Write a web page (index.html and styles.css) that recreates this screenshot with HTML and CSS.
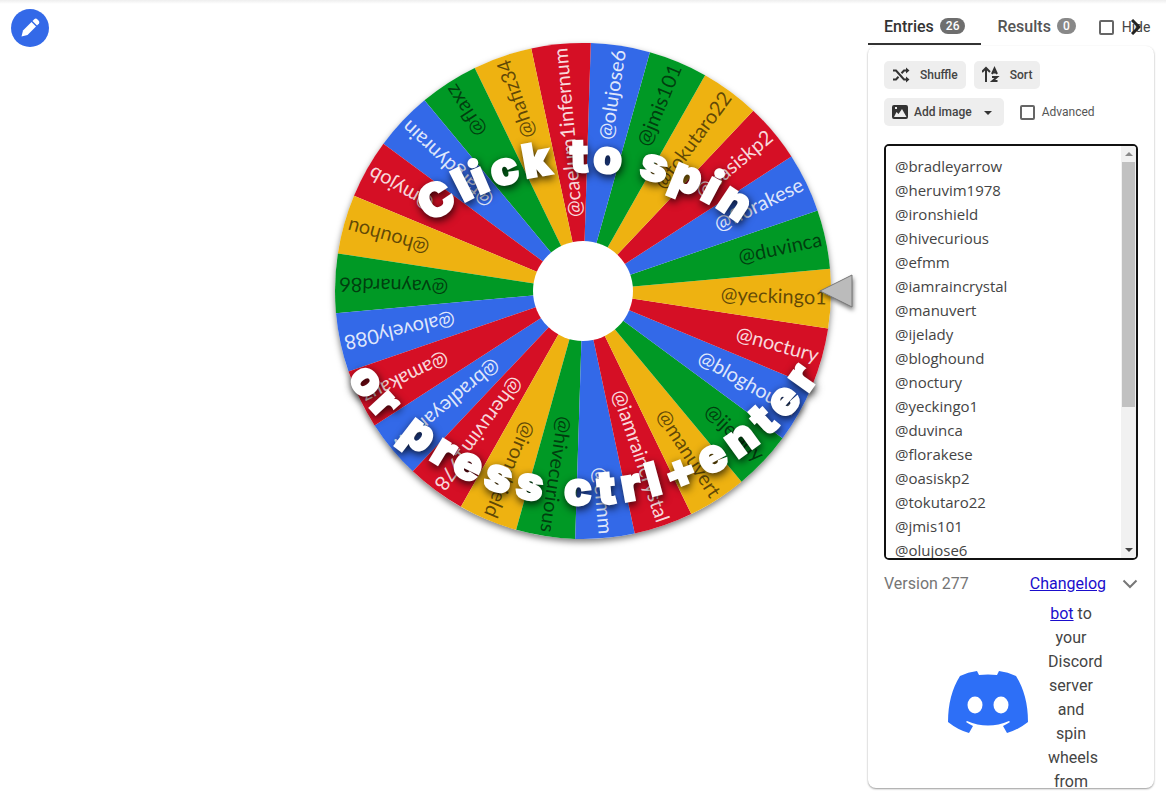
FILE: index.html
```
<!DOCTYPE html>
<html lang="en">
<head>
  <meta charset="UTF-8">
  <meta name="viewport" content="width=device-width, initial-scale=1.0">
  <title>Wheel of Names</title>
  <link rel="stylesheet" href="styles.css">
</head>
<body>
  <div class="page">
    <div class="left">
      <button class="edit-button" aria-label="Edit title">
        <svg width="20" height="20" viewBox="0 0 20 20" fill="#fff"><path d="M1.500 18.500 3 12.500 11.500 4 16 8.500 7.500 17Z"/><path d="M12.500 3 14.500 1Q16 0 17.500 1.500L18.500 2.500Q20 4 19 5.500L17 7.500Z"/></svg>
      </button>
    </div>

    <main class="stage">
      <svg class="wheel" viewBox="0 0 570 570">
        <circle class="wheel-shadow" cx="285" cy="285" r="248"/>
        <g id="slices"></g>
        <circle cx="285" cy="285" r="50" fill="#fff"/>
        <path class="pointer" d="M522 285 554 269V301Z"/>
        <text class="hint" id="hint-top">Click to spin</text>
        <text class="hint" id="hint-bottom">or press ctrl+enter</text>
      </svg>
    </main>

    <aside class="sidebar">
      <div class="tabs">
        <button class="tab active">Entries <span class="badge">26</span></button>
        <button class="tab">Results <span class="badge light">0</span></button>
        <label class="hide"><input type="checkbox"> <span>Hide</span></label>
        <svg class="tab-arrow" width="10" height="16" viewBox="0 0 10 16"><path d="M1 1 8 8 1 15" fill="none" stroke="#222" stroke-width="3"/></svg>
      </div>

      <div class="card">
        <div class="tools">
          <button class="tool">
            <svg width="18" height="18" viewBox="0 0 18 18" fill="none" stroke="#333" stroke-width="2"><path d="M1 4.500H4L12 13.500H15M1 13.500H4L6.500 10.800M9.500 7.200 12 4.500H15"/><path d="M14 1.500 17.500 4.500 14 7.500ZM14 10.500 17.500 13.500 14 16.500Z" fill="#333" stroke="none"/></svg>
            <span>Shuffle</span>
          </button>
          <button class="tool">
            <svg width="18" height="18" viewBox="0 0 18 18" fill="none" stroke="#333" stroke-width="2"><path d="M4 16V3M0 6 4 2 8 6"/><path d="M10 8 12.500 2.500 15 8M11 6.500H14M10 11H15L10.500 15H15.500"/></svg>
            <span>Sort</span>
          </button>
          <button class="tool image">
            <svg width="18" height="18" viewBox="0 0 18 18"><path fill="#333" fill-rule="evenodd" d="M2 2H14Q16 2 16 4V14Q16 16 14 16H2Q0 16 0 14V4Q0 2 2 2ZM2 14H14.500L10 6 6.500 11 4.500 9ZM3 4V6H5V4Z"/></svg>
            <span>Add image</span>
            <svg class="caret" width="8" height="4" viewBox="0 0 8 4"><path fill="#333" d="M0 0H8L4 4Z"/></svg>
          </button>
          <label class="advanced"><input type="checkbox"> <span>Advanced</span></label>
        </div>

        <div class="entries">
<textarea id="names" aria-label="Entries" spellcheck="false">
@bradleyarrow
@heruvim1978
@ironshield
@hivecurious
@efmm
@iamraincrystal
@manuvert
@ijelady
@bloghound
@noctury
@yeckingo1
@duvinca
@florakese
@oasiskp2
@tokutaro22
@jmis101
@olujose6
@caelum1infernum
@hafiz34
@flaxz
@fargdynrain
@myjob
@houhou
@vaynard86
@alovely088
@amakauz</textarea>
          <div class="scrollbar">
            <svg width="8" height="4" viewBox="0 0 8 4"><path fill="#8a8a8a" d="M0 4H8L4 0Z"/></svg>
            <div class="thumb"></div>
            <svg width="8" height="4" viewBox="0 0 8 4"><path fill="#444" d="M0 0H8L4 4Z"/></svg>
          </div>
        </div>

        <div class="version">
          <span>Version 277</span>
          <a href="#">Changelog</a>
          <svg width="16" height="10" viewBox="0 0 16 10"><path d="M1.500 1.500 8 8 14.500 1.500" fill="none" stroke="#777" stroke-width="2"/></svg>
        </div>

        <div class="news">
          <svg class="discord" width="80" height="62" viewBox="0 0 80 62">
            <path fill="#2d6ff7" d="M12 5Q20 1 29 0L31 4Q40 3 49 4L51 0Q60 1 68 5Q80 24 80 51Q70 59 59 62L55 55Q59 53 62 51L61 50Q40 59 19 50L18 51Q21 53 25 55L21 62Q10 59 0 51Q0 24 12 5Z"/>
            <ellipse cx="27" cy="34" rx="7.500" ry="8.500" fill="#fff"/>
            <ellipse cx="53" cy="34" rx="7.500" ry="8.500" fill="#fff"/>
          </svg>
          <p><a href="#">bot</a> to your Discord server and spin wheels from</p>
        </div>
      </div>
    </aside>
  </div>

  <script src="wheel.js"></script>
</body>
</html>
```
FILE: styles.css
```
* {
  box-sizing: border-box;
}

body {
  margin: 0;
  background: #fff;
  color: #444;
  font-family: Roboto, "Liberation Sans", sans-serif;
  font-size: 16px;
  line-height: 24px;
}

button {
  border: none;
  font-family: inherit;
  color: inherit;
  cursor: pointer;
}

a {
  color: #1a0dcc;
}

.page {
  display: grid;
  grid-template-columns: minmax(298px, 1fr) minmax(0, 2fr) minmax(298px, 1fr);
  height: 100vh;
  overflow: hidden;
  background: linear-gradient(#eee, #fff 4px);
}

.left {
  padding: 9px 11px;
}

.edit-button {
  display: flex;
  align-items: center;
  justify-content: center;
  width: 38px;
  height: 38px;
  padding: 0;
  border-radius: 50%;
  background: #3369e8;
}

/* wheel */
.wheel {
  display: block;
  width: 100%;
  margin-top: 6px;
  overflow: visible;
}

.wheel-shadow {
  fill: #fff;
  filter: drop-shadow(0 3px 3px rgba(0, 0, 0, 0.5));
}

.name {
  font-family: Lato, sans-serif;
  font-size: 20px;
  text-anchor: end;
}

.pointer {
  fill: #bbb;
  stroke: #777;
  stroke-width: 1;
  filter: drop-shadow(1px 3px 2px rgba(0, 0, 0, 0.5));
}

.hint {
  font-family: Inter, sans-serif;
  font-size: 46px;
  font-weight: 900;
  fill: #fff;
  stroke: #fff;
  stroke-width: 2;
  filter: drop-shadow(1px 3px 4px rgba(0, 0, 0, 0.8));
}

/* sidebar */
.sidebar {
  display: flex;
  flex-direction: column;
  min-height: 0;
  padding: 9px 12px 6px 0;
}

.tabs {
  display: flex;
  position: relative;
  height: 36px;
}

.tab {
  display: flex;
  align-items: center;
  gap: 6px;
  padding: 0 16px;
  border-bottom: 2px solid transparent;
  background: none;
  font-size: 16px;
  font-weight: 500;
  color: #555;
}

.tab.active {
  border-color: #333;
  color: #333;
}

.badge {
  padding: 0 6px;
  border-radius: 8px;
  background: #6e6e6e;
  color: #fff;
  font-size: 12px;
  line-height: 16px;
}

.badge.light {
  background: #888;
}

input[type="checkbox"] {
  appearance: none;
  width: 15px;
  height: 15px;
  margin: 0;
  border: 2px solid #666;
  border-radius: 2px;
}

.hide {
  display: flex;
  align-items: center;
  gap: 8px;
  margin-left: 7px;
  font-size: 14px;
}

.tab-arrow {
  position: absolute;
  right: 13px;
  top: 10px;
}

.card {
  display: flex;
  flex: 1;
  flex-direction: column;
  min-height: 0;
  margin-top: 1px;
  padding: 15px 16px 0;
  overflow: hidden;
  border-radius: 8px;
  box-shadow: 0 1px 2px rgba(0, 0, 0, 0.4);
}

.tools {
  display: flex;
  flex-wrap: wrap;
  gap: 8px;
  row-gap: 9px;
}

.tool {
  display: flex;
  align-items: center;
  gap: 10px;
  height: 28px;
  padding: 0 8px;
  border-radius: 5px;
  background: #eee;
  font-size: 12px;
  font-weight: 500;
}

.tool.image {
  gap: 4px;
}

.caret {
  margin: 2px 4px 0 8px;
}

.advanced {
  display: flex;
  align-items: center;
  gap: 7px;
  margin-left: 8px;
  color: #555;
  font-size: 12px;
}

.entries {
  display: flex;
  flex: none;
  height: 416px;
  margin-top: 18px;
  border: 2px solid #111;
  border-radius: 5px;
  overflow: hidden;
}

.entries textarea {
  flex: 1;
  min-width: 0;
  padding: 8px 9px;
  border: none;
  outline: none;
  resize: none;
  overflow: hidden;
  color: #444;
  font-family: "Open Sans", sans-serif;
  font-size: 15px;
  line-height: 24px;
}

.scrollbar {
  display: flex;
  flex-direction: column;
  align-items: center;
  width: 15px;
  padding: 6px 0;
  background: #f1f1f1;
}

.thumb {
  width: 13px;
  height: 245px;
  margin: 6px 0 auto;
  background: #c1c1c1;
}

.version {
  display: flex;
  align-items: center;
  margin-top: 12px;
  color: #757575;
}

.version a {
  margin: 0 16px 0 auto;
}

.news {
  display: flex;
  gap: 20px;
  min-height: 0;
  margin-top: 6px;
  padding-left: 64px;
}

.discord {
  flex: none;
  margin-top: 69px;
}

.news p {
  width: 46px;
  margin: 0;
  text-align: center;
}
```
FILE: wheel.js
```
const SVG = 'http://www.w3.org/2000/svg';
const CENTER = 285;
const RADIUS = 248;
const START = 1.8;
const colors = ['#3369e8', '#d50f25', '#eeb211', '#009925'];

const names = document.getElementById('names').value.split('\n');
const slices = document.getElementById('slices');
const step = 360 / names.length;

function point(deg) {
  const rad = deg * Math.PI / 180;
  return (CENTER + RADIUS * Math.cos(rad)) + ' ' + (CENTER + RADIUS * Math.sin(rad));
}

names.forEach((name, i) => {
  const angle = START - (i - 10) * step;
  const color = i % 4;

  const slice = document.createElementNS(SVG, 'path');
  slice.setAttribute('d', `M${CENTER} ${CENTER}L${point(angle - step / 2)}A${RADIUS} ${RADIUS} 0 0 1 ${point(angle + step / 2)}Z`);
  slice.setAttribute('fill', colors[color]);
  slices.appendChild(slice);

  const text = document.createElementNS(SVG, 'text');
  text.setAttribute('class', 'name');
  text.setAttribute('x', CENTER + RADIUS - 4);
  text.setAttribute('y', CENTER + 6);
  text.setAttribute('fill', color < 2 ? '#fff' : '#000');
  text.setAttribute('fill-opacity', color < 2 ? 0.85 : 0.6);
  text.setAttribute('transform', `rotate(${angle} ${CENTER} ${CENTER})`);
  text.textContent = name;
  slices.appendChild(text);
});

// Puts every letter on an arc, side is 1 above the centre and -1 below it
function bend(id, cx, cy, radius, side, gap) {
  const text = document.getElementById(id);
  const widths = [...text.textContent].map((c, i) => text.getSubStringLength(i, 1) + gap);
  const total = widths.reduce((a, b) => a + b, 0);
  const xs = [], ys = [], turns = [];
  let pos = -total / 2;
  widths.forEach(w => {
    const a = (pos + w / 2) / radius;
    const half = (w - gap) / 2;
    xs.push(cx + radius * Math.sin(a) - half * Math.cos(a));
    ys.push(cy - side * (radius * Math.cos(a) + half * Math.sin(a)));
    turns.push(side * a * 180 / Math.PI);
    pos += w;
  });
  text.setAttribute('x', xs.join(' '));
  text.setAttribute('y', ys.join(' '));
  text.setAttribute('rotate', turns.join(' '));
}

bend('hint-top', 287, 422, 256, 1, 4);
bend('hint-bottom', 285, 216, 283, -1, 7);
```
